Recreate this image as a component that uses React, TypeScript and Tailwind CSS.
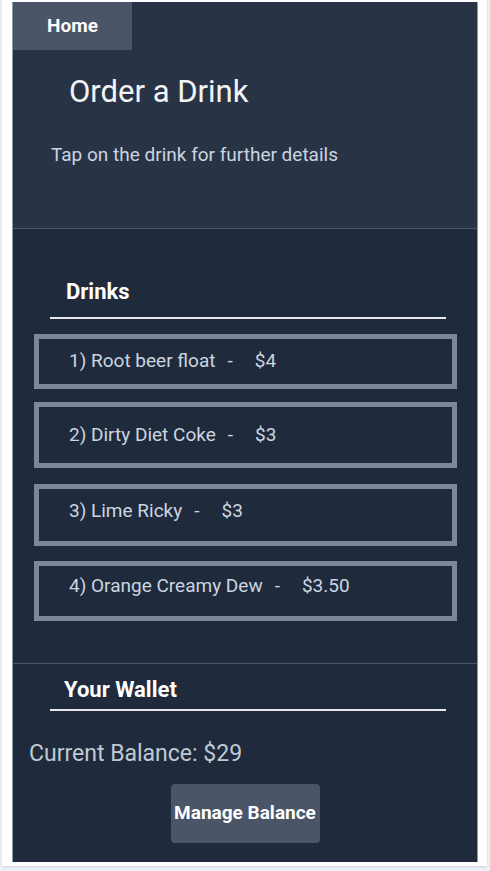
const drinks = [
  { name: '1) Root beer float', price: '$4', box: 'h-[55px] pt-[11px]', gap: 'mt-[15px]' },
  { name: '2) Dirty Diet Coke', price: '$3', box: 'h-[66px] pt-[17px]', gap: 'mt-[13px]' },
  { name: '3) Lime Ricky', price: '$3', box: 'h-[62px] pt-[11px]', gap: 'mt-[16px]' },
  { name: '4) Orange Creamy Dew', price: '$3.50', box: 'h-[60px] pt-[9px]', gap: 'mt-[15px]' },
];

export default function App() {
  return (
    <div className="min-h-screen bg-[#edf2f7] pl-[2px] pr-[3px] font-['Roboto',sans-serif]">
      <div className="bg-white pl-[10px] pr-[9px] pt-[2px] pb-[4px] shadow-sm">
        <div className="bg-[#1f2b3c] border-x border-[#8c99a8]">
          {/* Header */}
          <header className="h-[227px] bg-[#283446] border-b border-[#4a5568]">
            <div className="w-[119px] h-[48px] bg-[#4a5568] flex items-center justify-center text-[19px] font-bold text-white">
              Home
            </div>
            <h1 className="ml-[56px] mt-[24px] text-[31px] leading-[36px] text-[#f3f4f6]">Order a Drink</h1>
            <p className="ml-[38px] mt-[33px] text-[19px] leading-[24px] text-[#cbd5e0]">
              Tap on the drink for further details
            </p>
          </header>

          {/* Drinks */}
          <section className="pt-[49px] pb-[42px] border-b border-[#4a5568]">
            <h2 className="ml-[53px] text-[22px] leading-[28px] font-bold text-white">Drinks</h2>
            <div className="ml-[37px] w-[396px] h-[2px] mt-[11px] bg-[#e5e7eb]" />
            {drinks.map((d) => (
              <div
                key={d.name}
                className={`${d.gap} ${d.box} ml-[21px] w-[423px] border-[5px] border-[#7b8899] pl-[30px] text-[19px] leading-[22px] text-[#cbd5e0]`}
              >
                <span>{d.name}</span>
                <span className="ml-[12px] mr-[22px]">-</span>
                <span>{d.price}</span>
              </div>
            ))}
          </section>

          {/* Wallet */}
          <section className="pt-[12px] pb-[19px]">
            <h2 className="ml-[51px] text-[22px] leading-[28px] font-bold text-white">Your Wallet</h2>
            <div className="ml-[37px] w-[396px] h-[2px] mt-[5px] bg-[#e5e7eb]" />
            <p className="ml-[16px] mt-[29px] text-[23px] leading-[28px] text-[#bfc9d4]">Current Balance: $29</p>
            <div className="mt-[16px] flex justify-center">
              <button className="w-[149px] h-[59px] bg-[#4a5568] rounded-sm text-[19px] font-bold text-white">
                Manage Balance
              </button>
            </div>
          </section>
        </div>
      </div>
    </div>
  );
}
